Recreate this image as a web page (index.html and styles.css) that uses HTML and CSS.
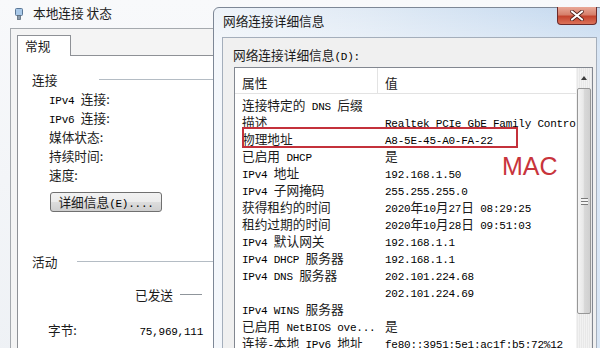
FILE: index.html
```html
<!DOCTYPE html>
<html lang="zh-CN">
<head>
<meta charset="UTF-8">
<title>本地连接 状态</title>
<link rel="stylesheet" href="styles.css">
</head>
<body>

<!-- 本地连接 状态 -->
<div class="win win-status">
  <div class="status-title">
    <svg class="conn-icon" viewBox="0 0 8 12" width="8" height="12">
      <rect x="0.5" y="0.5" width="7" height="7" rx="1" fill="#a9c8e8" stroke="#5a7796"/>
      <rect x="2.5" y="7.5" width="3" height="4" fill="#8a9aab" stroke="#5d6b7a" stroke-width="0.8"/>
    </svg>
    <span>本地连接 状态</span>
  </div>
  <div class="status-client">
    <div class="tab">常规</div>
    <div class="tab-panel">
      <div class="group-head head-conn"><span>连接</span><i class="rule"></i></div>
      <div class="field"><span class="m">IPv4 </span>连接:</div>
      <div class="field"><span class="m">IPv6 </span>连接:</div>
      <div class="field">媒体状态:</div>
      <div class="field">持续时间:</div>
      <div class="field">速度:</div>
      <button class="btn">详细信息<span class="m">(E)....</span></button>

      <div class="group-head head-act"><span>活动</span><i class="rule"></i></div>
      <div class="sent-row"><span>已发送</span><i class="rule"></i></div>
      <div class="bytes-row"><span>字节:</span><span class="m">75,969,111</span></div>
    </div>
  </div>
</div>

<!-- 网络连接详细信息 -->
<div class="win win-details">
  <div class="details-title">网络连接详细信息</div>
  <div class="close-btn">
    <svg viewBox="0 0 14 11" width="14" height="11">
      <path d="M2 1.5 L12 9.5 M12 1.5 L2 9.5" stroke="#4a1c16" stroke-width="3.6" stroke-linecap="round"/>
      <path d="M2 1.5 L12 9.5 M12 1.5 L2 9.5" stroke="#fff" stroke-width="2.2" stroke-linecap="round"/>
    </svg>
  </div>
  <div class="details-client">
    <div class="list-label">网络连接详细信息<span class="m">(D):</span></div>
    <div class="listbox">
      <div class="list-main">
        <div class="list-head">
          <div class="col-a">属性</div>
          <div class="col-b">值</div>
        </div>
        <div class="list-rows">
          <div class="row"><div class="col-a">连接特定的<span class="m"> DNS </span>后缀</div><div class="col-b"></div></div>
          <div class="row"><div class="col-a">描述</div><div class="col-b"><span class="m">Realtek PCIe GbE Family Controller</span></div></div>
          <div class="row"><div class="col-a">物理地址</div><div class="col-b"><span class="m">A8-5E-45-A0-FA-22</span></div></div>
          <div class="row"><div class="col-a">已启用<span class="m"> DHCP</span></div><div class="col-b">是</div></div>
          <div class="row"><div class="col-a"><span class="m">IPv4 </span>地址</div><div class="col-b"><span class="m">192.168.1.50</span></div></div>
          <div class="row"><div class="col-a"><span class="m">IPv4 </span>子网掩码</div><div class="col-b"><span class="m">255.255.255.0</span></div></div>
          <div class="row"><div class="col-a">获得租约的时间</div><div class="col-b"><span class="m">2020</span>年<span class="m">10</span>月<span class="m">27</span>日<span class="m"> 08:29:25</span></div></div>
          <div class="row"><div class="col-a">租约过期的时间</div><div class="col-b"><span class="m">2020</span>年<span class="m">10</span>月<span class="m">28</span>日<span class="m"> 09:51:03</span></div></div>
          <div class="row"><div class="col-a"><span class="m">IPv4 </span>默认网关</div><div class="col-b"><span class="m">192.168.1.1</span></div></div>
          <div class="row"><div class="col-a"><span class="m">IPv4 DHCP </span>服务器</div><div class="col-b"><span class="m">192.168.1.1</span></div></div>
          <div class="row"><div class="col-a"><span class="m">IPv4 DNS </span>服务器</div><div class="col-b"><span class="m">202.101.224.68</span></div></div>
          <div class="row"><div class="col-a"></div><div class="col-b"><span class="m">202.101.224.69</span></div></div>
          <div class="row"><div class="col-a"><span class="m">IPv4 WINS </span>服务器</div><div class="col-b"></div></div>
          <div class="row"><div class="col-a">已启用<span class="m"> NetBIOS ove...</span></div><div class="col-b">是</div></div>
          <div class="row"><div class="col-a">连接<span class="m">-</span>本地<span class="m"> IPv6 </span>地址</div><div class="col-b"><span class="m">fe80::3951:5e1:ac1f:b5:72%12</span></div></div>
        </div>
      </div>
      <div class="vscroll">
        <div class="sb-up"><i class="arrow-up"></i></div>
        <div class="sb-thumb"><i class="grip"></i></div>
      </div>
    </div>
  </div>
</div>

<!-- 标注 -->
<div class="mark-box"></div>
<div class="mark-text">MAC</div>

</body>
</html>
```

FILE: styles.css
```css
body {
  margin: 0;
  width: 600px;
  height: 348px;
  overflow: hidden;
  position: relative;
  background: #fff;
  font-family: "Noto Sans CJK SC", sans-serif;
  font-size: 12.7px;
  color: #1c1c1c;
}
.m {
  font-family: "Liberation Mono", monospace;
  font-size: 11px;
  letter-spacing: -0.25px;
  color: #000;
}
.win {
  position: absolute;
  box-sizing: border-box;
}

/* 本地连接 状态 */
.win-status {
  left: 0;
  top: 0;
  width: 620px;
  height: 360px;
  background: linear-gradient(#f8f9fb, #eef1f5);
}
.status-title {
  height: 28px;
  box-sizing: border-box;
  padding: 5px 0 0 15px;
  display: flex;
  align-items: flex-start;
  gap: 10px;
  line-height: 16px;
}
.conn-icon {
  margin-top: 3px;
}
.status-client {
  margin-left: 10px;
  height: 330px;
  box-sizing: border-box;
  border-left: 1px solid #a5a9ae;
  border-top: 1px solid #a5a9ae;
  background: #f4f4f4;
  padding: 6px 0 0 6px;
}
.tab {
  position: relative;
  z-index: 1;
  width: 54px;
  height: 21px;
  box-sizing: border-box;
  border: 1px solid #8e9196;
  border-bottom: none;
  background: #fff;
  padding-left: 7px;
  line-height: 19px;
  margin-bottom: -1px;
}
.tab-panel {
  height: 300px;
  box-sizing: border-box;
  border: 1px solid #8e9196;
  background: #fff;
  padding: 14px 0 0 14px;
}
.group-head {
  display: flex;
  align-items: center;
  height: 19px;
  line-height: 19px;
}
.rule {
  flex: 1;
  height: 1px;
  background: #b4bcc4;
}
.head-conn .rule { margin-left: 42px; }
.head-act { margin-top: 40px; }
.head-act .rule { margin-left: 20px; }
.field {
  height: 19px;
  line-height: 19px;
  padding-left: 17px;
}
.btn {
  display: block;
  margin: 8px 0 0 18px;
  width: 112px;
  height: 20px;
  box-sizing: border-box;
  padding: 0;
  border: 1px solid #707070;
  border-radius: 3px;
  background: linear-gradient(#f2f2f2 0%, #ebebeb 50%, #dddddd 50%, #cfcfcf 100%);
  font: inherit;
  color: inherit;
  line-height: 18px;
}
.sent-row {
  display: flex;
  align-items: center;
  margin-top: 14px;
  padding-left: 103px;
  height: 19px;
  line-height: 19px;
}
.sent-row .rule {
  flex: none;
  width: 22px;
  margin-left: 7px;
  background: #8f959b;
}
.bytes-row {
  display: flex;
  justify-content: space-between;
  align-items: baseline;
  width: 171px;
  box-sizing: border-box;
  margin-top: 16px;
  padding-left: 16px;
  height: 19px;
  line-height: 19px;
}

/* 网络连接详细信息 */
.win-details {
  left: 213px;
  top: 7px;
  width: 392px;
  height: 360px;
  border: 1px solid #7d8796;
  border-radius: 6px 6px 0 0;
  background:
    linear-gradient(rgba(255, 255, 255, 0) 0, rgba(255, 255, 255, 0.35) 40px),
    linear-gradient(to right, #eef3f9 0%, #e0eaf5 40%, #c3d8ef 100%);
}
.details-title {
  height: 29px;
  box-sizing: border-box;
  padding: 5px 0 0 9px;
  line-height: 16px;
}
.close-btn {
  position: absolute;
  left: 343px;
  top: -1px;
  width: 40px;
  height: 18px;
  box-sizing: border-box;
  border: 1px solid #6b2a2a;
  border-top: none;
  border-radius: 0 0 4px 4px;
  background: linear-gradient(#e9a897, #d6806c 45%, #c4442e 55%, #dc7259);
  display: flex;
  align-items: center;
  justify-content: center;
}
.details-client {
  margin-left: 8px;
  width: 375px;
  height: 330px;
  box-sizing: border-box;
  border: 1px solid #a4aebb;
  background: #f0f0f0;
  padding: 9px 0 0 10px;
}
.list-label {
  line-height: 16px;
}
.listbox {
  margin: 2px 0 0 1px;
  width: 359px;
  height: 300px;
  box-sizing: border-box;
  border: 1px solid #828790;
  background: #fff;
  display: flex;
}
.list-main {
  flex: 1;
  min-width: 0;
  overflow: hidden;
}
.list-head {
  display: flex;
  border-bottom: 1px solid #e3e3e3;
}
.list-head .col-a,
.list-head .col-b {
  padding-top: 4px;
  line-height: 21px;
}
.list-head .col-a {
  border-right: 1px solid #e3e3e3;
}
.col-a {
  flex: none;
  width: 143px;
  box-sizing: border-box;
  padding-left: 7px;
  white-space: nowrap;
}
.col-b {
  flex: 1;
  min-width: 0;
  padding-left: 7px;
  white-space: nowrap;
  overflow: hidden;
}
.list-rows {
  padding-top: 2px;
}
.row {
  display: flex;
  height: 17px;
  line-height: 17px;
}

/* 滚动条 */
.vscroll {
  width: 16px;
  flex: none;
  display: flex;
  flex-direction: column;
  background: repeating-linear-gradient(90deg, #f2f2f2 0 1px, #e8e8e8 1px 2px);
}
.sb-up {
  height: 19px;
  display: flex;
  align-items: center;
  justify-content: center;
}
.arrow-up {
  width: 0;
  height: 0;
  border-left: 3.5px solid transparent;
  border-right: 3.5px solid transparent;
  border-bottom: 4px solid #3c3c3c;
}
.sb-thumb {
  margin: 1px 1px 0;
  height: 226px;
  box-sizing: border-box;
  border: 1px solid #979797;
  border-radius: 2px;
  background: linear-gradient(to right, #f4f4f4, #e8e8e8 45%, #d9d9d9 50%, #cfcfcf);
  display: flex;
  align-items: center;
  justify-content: center;
}
.grip {
  width: 7px;
  height: 7px;
  background: repeating-linear-gradient(#7a7a7a 0 1px, #f4f4f4 1px 3px);
}

/* 标注 */
.mark-box {
  position: absolute;
  left: 242px;
  top: 127px;
  width: 276px;
  height: 21px;
  box-sizing: border-box;
  border: 2px solid #c4313b;
}
.mark-text {
  position: absolute;
  left: 502px;
  top: 154px;
  font-family: "Liberation Sans", Arial, sans-serif;
  font-size: 25px;
  line-height: 25px;
  color: #c8343c;
}
```
